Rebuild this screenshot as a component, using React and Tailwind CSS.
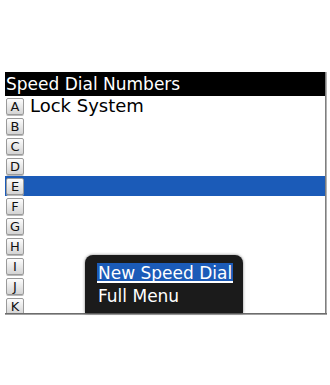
import React from "react";

const letters = ["A","B","C","D","E","F","G","H","I","J","K"];

function Key({ l }) {
  return (
    <div className="w-[18px] h-[17px] shrink-0 rounded-[2px] border border-[#9a9a9a] bg-gradient-to-b from-[#fdfdfd] to-[#d4d4d4] flex items-center justify-center text-[13px] leading-none text-[#111] shadow-[0_1px_0_#bbb]">
      {l}
    </div>
  );
}

export default function App() {
  return (
    <div className="w-[330px] h-[385px] bg-white relative overflow-hidden" style={{ fontFamily: '"DejaVu Sans", sans-serif' }}>
      <div className="pt-[72px] pl-[5px]">
        <div className="w-[322px] h-[243px] relative flex">
          <div className="w-[320px] h-[241px] overflow-hidden bg-white flex flex-col">
            <div className="h-[24px] bg-black text-white text-[17px] leading-[24px] pl-[1px] shrink-0">Speed Dial Numbers</div>
            {letters.map((l) => (
              <div key={l} className={`h-[20px] shrink-0 flex items-center ${l === "E" ? "bg-[#1b5bb8]" : ""}`}>
                <div className="pl-[1px] flex items-center">
                  <Key l={l} />
                </div>
                {l === "A" && <span className="ml-[6px] text-[18px] leading-none text-black">Lock System</span>}
              </div>
            ))}
          </div>
          <div className="absolute right-0 top-0 w-[2px] h-[243px] bg-gradient-to-r from-[#666] to-[#ccc]" />
          <div className="absolute left-0 bottom-0 w-[322px] h-[2px] bg-gradient-to-b from-[#555] to-[#bbb]" />
          <div className="absolute left-[80px] top-[183px] w-[158px] h-[58px] bg-[#1b1b1b] rounded-t-[8px] shadow-[0_0_3px_rgba(0,0,0,0.5)] pt-[8px] pl-[12px] pr-[5px]">
            <div className="h-[20px] bg-[#1b5bb8] border-b-2 border-white text-white text-[17px] leading-[20px] pl-[1px] w-[136px]">New Speed Dial</div>
            <div className="text-white text-[17px] leading-[20px] pl-[1px] mt-[3px]">Full Menu</div>
          </div>
        </div>
      </div>
    </div>
  );
}
